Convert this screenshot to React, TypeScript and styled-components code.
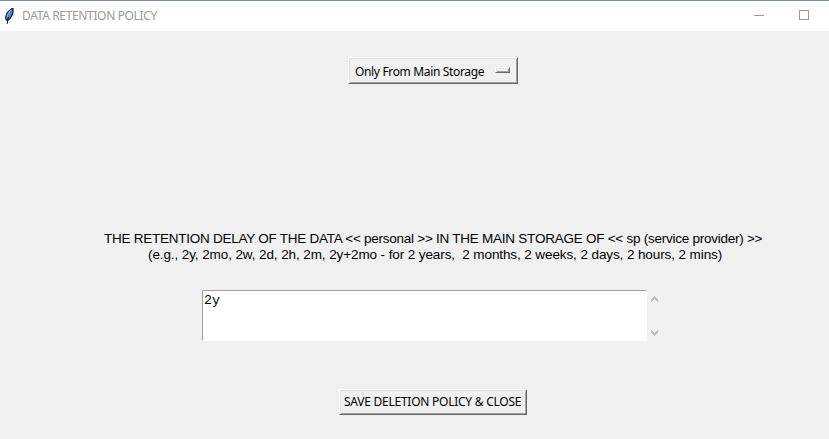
import React from 'react';
import styled, { createGlobalStyle } from 'styled-components';

const GlobalStyle = createGlobalStyle`
  * { box-sizing: border-box; }
  body { margin: 0; background: #f0f0f0; overflow: hidden; }
`;

const uiFont = `'Noto Sans', 'Open Sans', sans-serif`;

const Window = styled.div`
  width: 829px;
  height: 439px;
  display: flex;
  flex-direction: column;
  background: #f0f0f0;
  color: #000;
`;

const TitleBar = styled.header`
  height: 31px;
  flex: none;
  display: flex;
  align-items: center;
  padding: 0 20px 0 4px;
  border-top: 1px solid #7693a6;
  background: #fff;
`;

const Title = styled.h1<{ $spacing: number }>`
  flex: 1;
  margin: 0 0 0 7px;
  font: 400 12px/16px ${uiFont};
  letter-spacing: ${(p) => p.$spacing}px;
  color: #999;
  white-space: pre;
`;

const WindowControls = styled.div`
  display: flex;
  align-items: center;
  gap: 35px;
  margin-bottom: 2px;
`;

const MinimizeMark = styled.span`
  width: 10px;
  height: 1px;
  background: #999;
`;

const MaximizeMark = styled.span`
  width: 10px;
  height: 10px;
  border: 1px solid #999;
`;

const Body = styled.main`
  flex: 1;
  display: flex;
  flex-direction: column;
  padding-top: 26px;
`;

const RaisedButton = styled.button<{ $width: number; $height: number; $left: number; $spacing: number }>`
  width: ${(p) => p.$width}px;
  height: ${(p) => p.$height}px;
  margin: 0 0 0 ${(p) => p.$left}px;
  padding: 0 4px;
  display: flex;
  align-items: center;
  justify-content: space-between;
  flex: none;
  border: 1px solid;
  border-color: #fff #696969 #696969 #fff;
  border-radius: 0;
  box-shadow: inset 1px 1px #e3e3e3, inset -1px -1px #a0a0a0;
  background: #f0f0f0;
  color: #000;
  font: 400 12px/16px ${uiFont};
  letter-spacing: ${(p) => p.$spacing}px;
  white-space: pre;
`;

const MenuLabel = styled.span`
  margin: 2px 0 0 2px;
`;

const MenuIndicator = styled.span`
  width: 15px;
  height: 6px;
  margin: 0 3px 1px 0;
  flex: none;
  border: 1px solid;
  border-color: #fff #696969 #696969 #fff;
  box-shadow: inset 1px 1px #e3e3e3, inset -1px -1px #a0a0a0;
`;

const Message = styled.div`
  margin-top: 147px;
  font: 400 13.5px/16px 'Liberation Sans', Arial, sans-serif;
`;

const MessageLine = styled.div<{ $left: number; $spacing: number }>`
  height: 16px;
  padding-left: ${(p) => p.$left}px;
  letter-spacing: ${(p) => p.$spacing}px;
  white-space: pre;
`;

const EntryRow = styled.div`
  display: flex;
  height: 51px;
  margin: 27px 0 48px 202px;
`;

const Entry = styled.textarea`
  width: 445px;
  height: 51px;
  margin: 0;
  padding: 2px 0 0 1px;
  border: 1px solid;
  border-color: #a0a0a0 #fff #fff #a0a0a0;
  border-radius: 0;
  outline: none;
  resize: none;
  overflow: hidden;
  background: #fff;
  color: #000;
  font: 400 13.33px/16px 'Liberation Mono', 'Courier New', monospace;
`;

const ScrollTrack = styled.div`
  width: 15px;
  display: flex;
  flex-direction: column;
  align-items: center;
  justify-content: space-between;
  padding: 6px 0 5px;
`;

const Feather = () => (
  <svg width="11" height="18" viewBox="0 0 11 18">
    <path d="M7.6 1 L9.6 1 L9.6 5 L8.6 8.5 L6.5 12 L4 14 L1.5 13.2 L1 10 L2.4 6 L5 3 Z" fill="#1b2129" />
    <path d="M8.4 2 L8.4 5 L7.4 8.2 L5.3 11.4 L3.4 12.6 L2.3 12 L2.3 9.6 L3.6 6.4 L5.8 3.6 Z" fill="#3f83dc" />
    <path d="M6.6 3.6 L4.4 6.4 L3.2 9.6" fill="none" stroke="#8dbcf4" strokeWidth="1.1" />
    <path d="M4.6 10 L3.8 12.4 L3.3 16.8" fill="none" stroke="#111" strokeWidth="1" />
  </svg>
);

const Chevron = ({ down = false }: { down?: boolean }) => (
  <svg width="7" height="6" viewBox="0 0 7 6" shapeRendering="crispEdges">
    <path
      d={
        down
          ? 'M0 0H1V1H2V2H3V3H4V2H5V1H6V0H7V3H6V4H5V5H4V6H3V5H2V4H1V3H0Z'
          : 'M0 6H1V5H2V4H3V3H4V4H5V5H6V6H7V3H6V2H5V1H4V0H3V1H2V2H1V3H0Z'
      }
      fill="#bfbfbf"
    />
  </svg>
);

export default function App() {
  return (
    <>
      <GlobalStyle />
      <Window>
        <TitleBar>
          <Feather />
          <Title $spacing={-0.35}>DATA RETENTION POLICY</Title>
          <WindowControls>
            <MinimizeMark />
            <MaximizeMark />
          </WindowControls>
        </TitleBar>
        <Body>
          <RaisedButton $width={170} $height={27} $left={348} $spacing={-0.34}>
            <MenuLabel>Only From Main Storage</MenuLabel>
            <MenuIndicator />
          </RaisedButton>
          <Message>
            <MessageLine $left={104} $spacing={-0.25}>
              {'THE RETENTION DELAY OF THE DATA << personal >> IN THE MAIN STORAGE OF << sp (service provider) >>'}
            </MessageLine>
            <MessageLine $left={148} $spacing={-0.1}>
              {'(e.g., 2y, 2mo, 2w, 2d, 2h, 2m, 2y+2mo - for 2 years,  2 months, 2 weeks, 2 days, 2 hours, 2 mins)'}
            </MessageLine>
          </Message>
          <EntryRow>
            <Entry defaultValue="2y" spellCheck={false} />
            <ScrollTrack>
              <Chevron />
              <Chevron down />
            </ScrollTrack>
          </EntryRow>
          <RaisedButton $width={188} $height={26} $left={339} $spacing={-0.25}>
            {'SAVE DELETION POLICY & CLOSE'}
          </RaisedButton>
        </Body>
      </Window>
    </>
  );
}
